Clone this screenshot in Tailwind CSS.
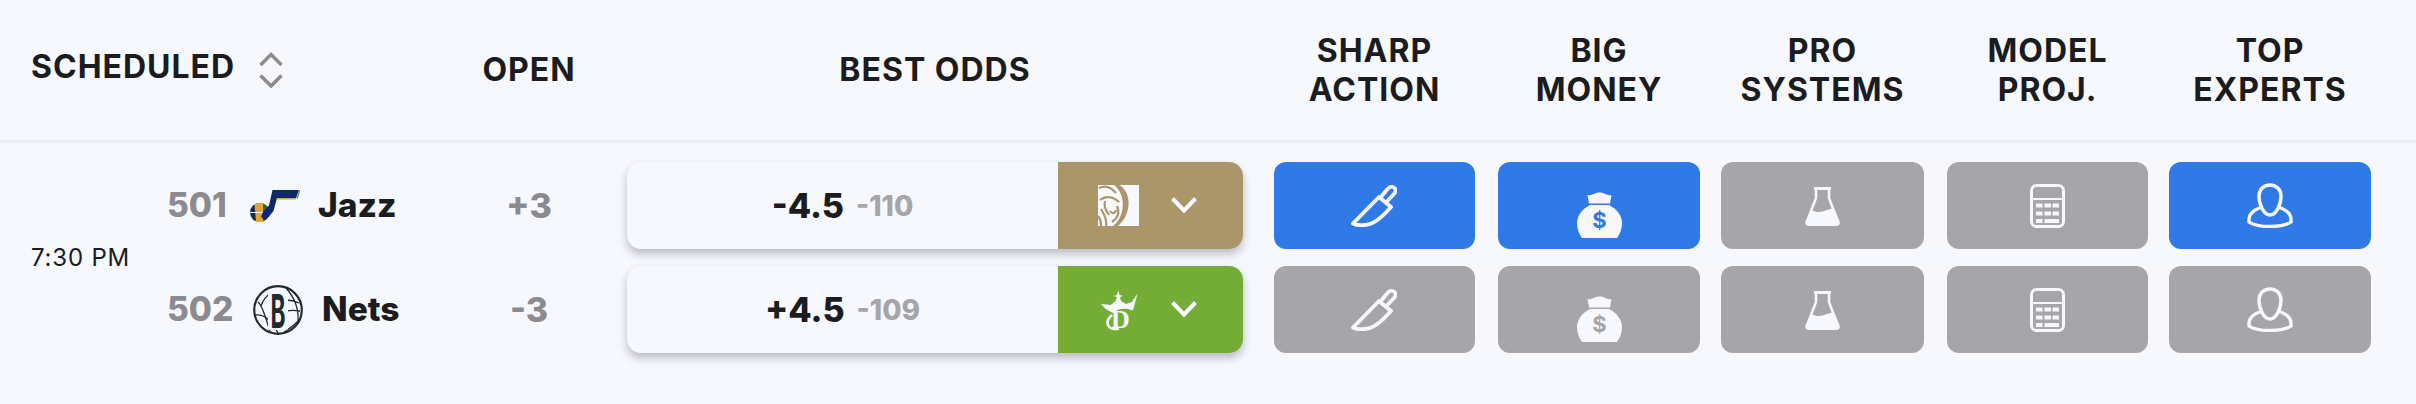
<!DOCTYPE html>
<html>
<head>
<meta charset="utf-8">
<script src="https://cdn.jsdelivr.net/npm/@tailwindcss/browser@4"></script>
</head>
<body class="m-0 bg-[#f7f8fd]">
<div class="w-[2416px] h-[404px] bg-[#f7f8fd] text-[#1b1c20] font-['Inter',sans-serif] overflow-hidden">
  <!-- Header -->
  <div class="h-[143px] border-b-[3px] border-[#eff0f5] pl-[31px] grid grid-cols-[409px_178px_625px_232px_225px_224px_224px_223px] items-center text-[32px] leading-[39px] font-bold tracking-[1px]">
    <div class="flex items-center gap-[24px] -mt-[8px]">
      <span>SCHEDULED</span>
      <svg class="mt-[7px]" width="24" height="36" viewBox="0 0 24 36" fill="none" stroke="#8b8a90" stroke-width="3.500"><path d="M1.500 13 12 2.500 22.500 13"/><path d="M1.500 23.500 12 34 22.500 23.500"/></svg>
    </div>
    <div class="text-center -mt-[2px]">OPEN</div>
    <div class="text-center pl-[9px] -mt-[2px]">BEST ODDS</div>
    <div class="justify-self-end w-[201px] text-center">SHARP<br>ACTION</div>
    <div class="justify-self-end w-[202px] text-center">BIG<br>MONEY</div>
    <div class="justify-self-end w-[203px] text-center">PRO<br>SYSTEMS</div>
    <div class="justify-self-end w-[201px] text-center">MODEL<br>PROJ.</div>
    <div class="justify-self-end w-[202px] text-center">TOP<br>EXPERTS</div>
  </div>

  <!-- Body -->
  <div class="pl-[31px] pt-[19px] grid grid-cols-[136px_273px_178px_625px_232px_225px_224px_224px_223px] grid-rows-[87px_87px] gap-y-[17px] items-center">
    <div class="row-span-2 text-[24px] tracking-[0.8px] text-[#1b1c20] pt-[1px]">7:30 PM</div>

    <!-- Row 1 -->
    <div class="flex items-center">
      <span class="text-[33.5px] font-extrabold text-[#8b8a90] w-[83px]">501</span>
      <svg class="w-[50px] h-[33px]" viewBox="0 0 50 33">
        <circle cx="9.500" cy="23.500" r="9.500" fill="#0f2a5c"/>
        <path d="M4.500 15.500a9.500 9.500 0 0 1 9 -1L13 33H6Z" fill="#e2a72e"/>
        <path d="M13 14.500a9.500 9.500 0 0 1 0 18Z" fill="#2c6b33"/>
        <path d="M0 23.500H19" stroke="#f7f8fd" stroke-width="1"/>
        <path d="M13 23 19 16.500 22.500 1H49L46 9H27L23.500 22 19 27.500 15 31 11 28Z" fill="#102a66"/>
        <path d="M46.500 9 49.500 1H50.500L47.500 10Z" fill="#4b8a36"/>
        <path d="M27 9H46L45.500 10.500H26.500Z" fill="#c9a93a"/>
      </svg>
      <span class="text-[33.5px] font-extrabold ml-[18px]">Jazz</span>
    </div>
    <div class="text-center text-[34px] font-extrabold text-[#8b8a90]">+3</div>
    <div class="pl-[9px]">
      <div class="flex h-[87px] w-[616px] rounded-[14px] overflow-hidden bg-[#f7f8fd] shadow-[0_5px_9px_rgba(60,60,80,0.32)]">
        <div class="w-[431px] flex items-center justify-center gap-[12px]">
          <span class="text-[34px] font-extrabold">-4.5</span>
          <span class="text-[28px] font-extrabold text-[#a6a5aa]">-110</span>
        </div>
        <div class="flex-1 bg-[#ab9669] flex items-center pl-[40px]">
          <svg width="41" height="41" viewBox="0 0 41 41">
            <rect width="41" height="41" fill="#f7f8fd"/>
            <path d="M21 0C33 6 35 28 20 41H15C28 31 28 9 16 0Z" fill="#ab9669"/>
            <g fill="none" stroke="#ab9669" stroke-width="2.200">
              <path d="M1 3C7 0 13 2 18 8"/>
              <path d="M2 15C8 10 16 12 21 17"/>
              <path d="M7 16C5 23 9 27 11 30"/>
              <path d="M19 21C22 28 20 33 14 37"/>
              <path d="M3 24C7 30 9 35 8 41"/>
              <path d="M0 31C3 34 3 38 3 41"/>
              <path d="M12 26C14 29 17 29 18 25"/>
            </g>
          </svg>
          <svg class="ml-[32px]" width="26" height="17" viewBox="0 0 26 17" fill="none" stroke="#f7f8fd" stroke-width="4"><path d="M1.500 1.500 13 13.500 24.500 1.500"/></svg>
        </div>
      </div>
    </div>
    <div class="justify-self-end w-[201px] h-[87px] rounded-[12px] bg-[#307ae8] flex items-center justify-center pr-[2px]">
      <svg width="46" height="42" viewBox="0 0 46 42" fill="none" stroke="#f7f8fd" stroke-width="3.800" stroke-linejoin="round"><path d="M2 38.500 28 12 40 22C32 31 24 39 14 40 9 40.500 4 40 2 38.500Z"/><path d="M29 13 37 3.500C39 1.500 42 1.500 43.500 3 45 4.500 45 6.500 43.500 8.500L34.500 18"/></svg>
    </div>
    <div class="justify-self-end w-[202px] h-[87px] rounded-[12px] bg-[#307ae8] flex items-start justify-center pt-[30px]">
      <svg width="45" height="46" viewBox="0 0 45 46"><path d="M10.500 3 C16 4 17 0.500 22.500 0.500 28 0.500 29 4 34.500 3L33 11.500H12Z" fill="#f7f8fd"/><path d="M13 13H32C40 17 45 24 45 31 45 37 43 42 40 46H5C2 42 0 37 0 31 0 24 5 17 13 13Z" fill="#f7f8fd"/><text x="22.500" y="36" text-anchor="middle" font-family="Inter" font-weight="700" font-size="22" fill="#307ae8">$</text></svg>
    </div>
    <div class="justify-self-end w-[203px] h-[87px] rounded-[12px] bg-[#a6a5aa] flex items-center justify-center">
      <svg width="35" height="40" viewBox="0 0 35 40"><g fill="none" stroke="#f7f8fd" stroke-width="2.500"><path d="M10 2.500H25M11 3V12L3 33M24 3V12L32 33"/></g><path d="M9 1H26V4H9ZM6.500 24C12 27 15 26 19 25L28.500 22 34.500 35C35.500 38 34 40 31 40H4C1 40 -0.500 38 0.500 35Z" fill="#f7f8fd"/></svg>
    </div>
    <div class="justify-self-end w-[201px] h-[87px] rounded-[12px] bg-[#a6a5aa] flex items-center justify-center">
      <svg width="35" height="44" viewBox="0 0 35 44" fill="none"><rect x="1.500" y="1.500" width="32" height="41" rx="5" stroke="#f7f8fd" stroke-width="3"/><path d="M2 15H33" stroke="#f7f8fd" stroke-width="2"/><path d="M6 19.500H12.500V23.500H6ZM14.500 19.500H21V23.500H14.500ZM22.500 19.500H29V23.500H22.500ZM6 27.500H12.500V31.500H6ZM14.500 27.500H21V31.500H14.500ZM22.500 27.500H29V31.500H22.500ZM6 35H12.500V39H6ZM14.500 35H29V39H14.500Z" fill="#f7f8fd"/></svg>
    </div>
    <div class="justify-self-end w-[202px] h-[87px] rounded-[12px] bg-[#307ae8] flex items-center justify-center">
      <svg width="46" height="45" viewBox="0 0 46 45" fill="none" stroke="#f7f8fd" stroke-width="3.400"><path d="M23 2C30 2 34 7 34 13 34 22 29 32 23 32 17 32 12 22 12 13 12 7 16 2 23 2Z"/><path d="M13.500 24.500C7 27 2 31 2 36V39C6 42 14 43.500 23 43.500 32 43.500 40 42 44 39V36C44 31 39 27 32.500 24.500"/></svg>
    </div>

    <!-- Row 2 -->
    <div class="flex items-center">
      <span class="text-[33.5px] font-extrabold text-[#8b8a90] w-[86px]">502</span>
      <svg class="w-[50px] h-[58px] overflow-visible" viewBox="0 0 50 58" fill="none" stroke="#1f2a2e">
        <circle cx="25" cy="29" r="23.800" stroke-width="2.200" fill="#f7f8fd"/>
        <path d="M5 21C10 25 13 38 17 51M33 7C41 16 46 26 45 40M2 34C10 33 18 38 25 52M30 52C36 48 42 44 47 38M33 19C38 19 42 20 46 22M33 30C38 29 42 29 47 30M18 12C13 15 10 19 8 25" stroke-width="1.300"/>
        <rect x="15" y="10" width="20" height="39" rx="2" fill="#f7f8fd" stroke="none"/>
        <text x="25" y="46.500" text-anchor="middle" textLength="15" lengthAdjust="spacingAndGlyphs" font-family="Inter" font-weight="700" font-size="47" fill="#1f2a2e" stroke="none">B</text>
      </svg>
      <span class="text-[33.5px] font-extrabold ml-[19px]">Nets</span>
    </div>
    <div class="text-center text-[34px] font-extrabold text-[#8b8a90]">-3</div>
    <div class="pl-[9px]">
      <div class="flex h-[87px] w-[616px] rounded-[14px] overflow-hidden bg-[#f7f8fd] shadow-[0_5px_9px_rgba(60,60,80,0.32)]">
        <div class="w-[431px] flex items-center justify-center gap-[12px]">
          <span class="text-[34px] font-extrabold">+4.5</span>
          <span class="text-[28px] font-extrabold text-[#a6a5aa]">-109</span>
        </div>
        <div class="flex-1 bg-[#74ad36] flex items-center pl-[43px]">
          <svg class="overflow-visible" width="37" height="40" viewBox="0 0 37 40">
            <path d="M0 13.700 9.700 15 14.500 11 16 7 12.500 6 16 5 17.300 0.500 18.500 5 22 6 19 7 20 11 25 14 30.700 12 36.500 3.700 32 20.500C25 17.500 17 18 12.300 23 7 21 3 18 0 13.700Z" fill="#f7f8fd"/>
            <text x="19.500" y="38" text-anchor="middle" font-family="Liberation Serif" font-weight="700" font-size="26" fill="#f7f8fd">D</text>
            <path d="M11 25C8 28 5 31 7 35 9 39 14 39.500 18 38.500" fill="none" stroke="#f7f8fd" stroke-width="2.600"/>
          </svg>
          <svg class="ml-[33px]" width="26" height="17" viewBox="0 0 26 17" fill="none" stroke="#f7f8fd" stroke-width="4"><path d="M1.500 1.500 13 13.500 24.500 1.500"/></svg>
        </div>
      </div>
    </div>
    <div class="justify-self-end w-[201px] h-[87px] rounded-[12px] bg-[#a6a5aa] flex items-center justify-center pr-[2px]">
      <svg width="46" height="42" viewBox="0 0 46 42" fill="none" stroke="#f7f8fd" stroke-width="3.800" stroke-linejoin="round"><path d="M2 38.500 28 12 40 22C32 31 24 39 14 40 9 40.500 4 40 2 38.500Z"/><path d="M29 13 37 3.500C39 1.500 42 1.500 43.500 3 45 4.500 45 6.500 43.500 8.500L34.500 18"/></svg>
    </div>
    <div class="justify-self-end w-[202px] h-[87px] rounded-[12px] bg-[#a6a5aa] flex items-start justify-center pt-[30px]">
      <svg width="45" height="46" viewBox="0 0 45 46"><path d="M10.500 3 C16 4 17 0.500 22.500 0.500 28 0.500 29 4 34.500 3L33 11.500H12Z" fill="#f7f8fd"/><path d="M13 13H32C40 17 45 24 45 31 45 37 43 42 40 46H5C2 42 0 37 0 31 0 24 5 17 13 13Z" fill="#f7f8fd"/><text x="22.500" y="36" text-anchor="middle" font-family="Inter" font-weight="700" font-size="22" fill="#a6a5aa">$</text></svg>
    </div>
    <div class="justify-self-end w-[203px] h-[87px] rounded-[12px] bg-[#a6a5aa] flex items-center justify-center">
      <svg width="35" height="40" viewBox="0 0 35 40"><g fill="none" stroke="#f7f8fd" stroke-width="2.500"><path d="M10 2.500H25M11 3V12L3 33M24 3V12L32 33"/></g><path d="M9 1H26V4H9ZM6.500 24C12 27 15 26 19 25L28.500 22 34.500 35C35.500 38 34 40 31 40H4C1 40 -0.500 38 0.500 35Z" fill="#f7f8fd"/></svg>
    </div>
    <div class="justify-self-end w-[201px] h-[87px] rounded-[12px] bg-[#a6a5aa] flex items-center justify-center">
      <svg width="35" height="44" viewBox="0 0 35 44" fill="none"><rect x="1.500" y="1.500" width="32" height="41" rx="5" stroke="#f7f8fd" stroke-width="3"/><path d="M2 15H33" stroke="#f7f8fd" stroke-width="2"/><path d="M6 19.500H12.500V23.500H6ZM14.500 19.500H21V23.500H14.500ZM22.500 19.500H29V23.500H22.500ZM6 27.500H12.500V31.500H6ZM14.500 27.500H21V31.500H14.500ZM22.500 27.500H29V31.500H22.500ZM6 35H12.500V39H6ZM14.500 35H29V39H14.500Z" fill="#f7f8fd"/></svg>
    </div>
    <div class="justify-self-end w-[202px] h-[87px] rounded-[12px] bg-[#a6a5aa] flex items-center justify-center">
      <svg width="46" height="45" viewBox="0 0 46 45" fill="none" stroke="#f7f8fd" stroke-width="3.400"><path d="M23 2C30 2 34 7 34 13 34 22 29 32 23 32 17 32 12 22 12 13 12 7 16 2 23 2Z"/><path d="M13.500 24.500C7 27 2 31 2 36V39C6 42 14 43.500 23 43.500 32 43.500 40 42 44 39V36C44 31 39 27 32.500 24.500"/></svg>
    </div>
  </div>
</div>
</body>
</html>
